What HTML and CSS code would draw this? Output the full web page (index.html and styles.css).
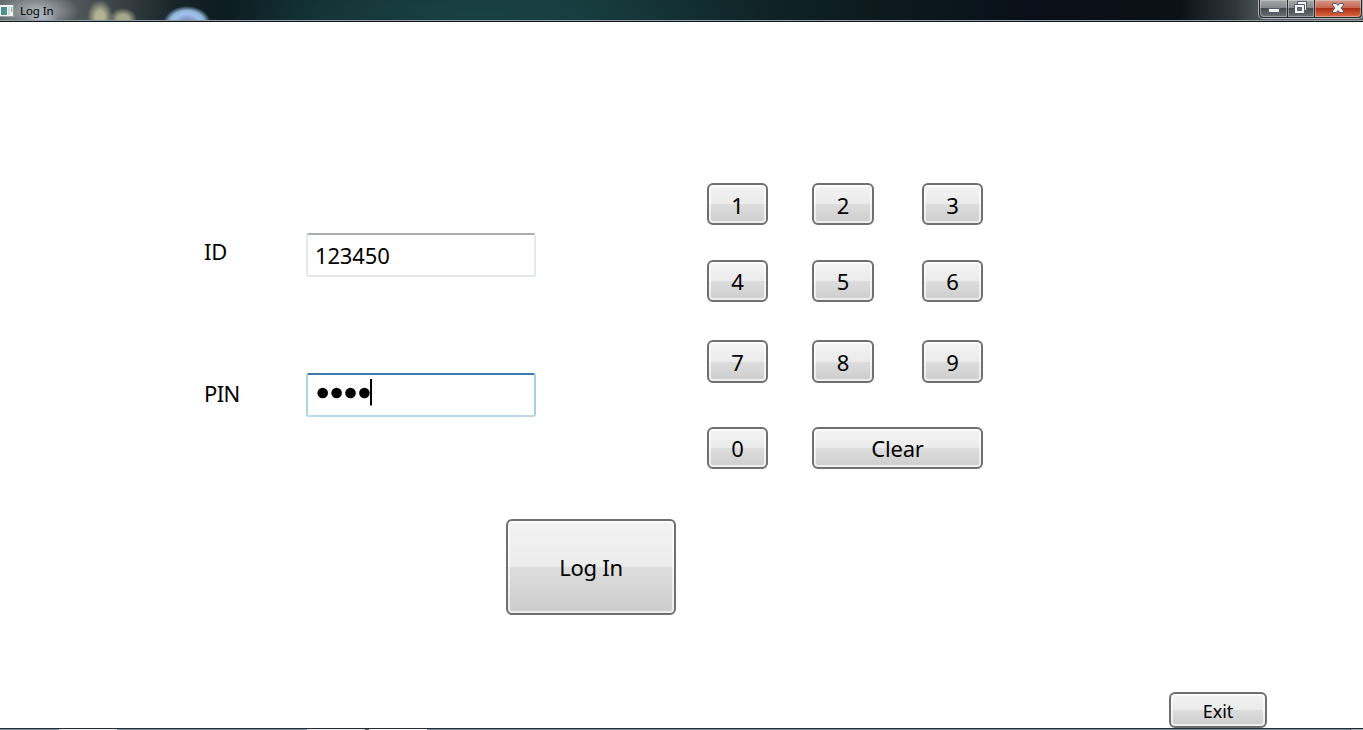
FILE: index.html
```
<!DOCTYPE html>
<html lang="en">
<head>
<meta charset="utf-8">
<title>Log In</title>
<link rel="stylesheet" href="styles.css">
</head>
<body>
<div class="window">
  <header class="titlebar">
    <svg class="app-icon" width="14" height="12" viewBox="0 0 14 12">
      <defs><linearGradient id="pic" x1="0" y1="0" x2="1" y2="1"><stop offset="0" stop-color="#4d80a5"/><stop offset="1" stop-color="#4d9b75"/></linearGradient></defs>
      <path d="M0 0h14v12H0z" fill="#f1f2f4"/><path d="M0 11.500h13.500V0" fill="none" stroke="#9a9fa5"/>
      <path d="M1 2h6v8H1z" fill="url(#pic)"/><path d="M8 2h2v8H8z" fill="#d3dbe0"/><path d="M11 2h1.500v5H11z" fill="#93bba8"/>
    </svg>
    <span class="title">Log In</span>
    <div class="controls">
      <div class="control minimize">
        <svg width="27" height="17" viewBox="0 0 27 17"><path d="M8.500 8.500h11v4h-11z" fill="#f5f5f5" stroke="#53596a"/></svg>
      </div>
      <div class="control restore">
        <svg width="26" height="17" viewBox="0 0 26 17"><path d="M9.500 1.500h9v9h-2v3h-10v-9h3z" fill="#f5f5f5" stroke="#53596a"/><path d="M9 4.500h7.500V11" fill="none" stroke="#53596a"/><path d="M9.500 7.500h4v3h-4z" fill="#70747d" stroke="#53596a"/></svg>
      </div>
      <div class="control close">
        <svg width="46" height="17" viewBox="0 0 46 17"><path d="M17.500 3.500h3.800l1.700 2 1.700-2h3.800v1.500l-2.500 3 2.500 3v1.500h-3.800l-1.700-2-1.700 2h-3.800v-1.500l2.500-3-2.500-3z" fill="#f5f5f5" stroke="#53596a"/></svg>
      </div>
    </div>
  </header>

  <main class="content">
    <div class="entry">
      <form class="fields">
        <label class="id-label" for="id">ID</label>
        <div class="field" id="id"><span class="value">123450</span></div>
        <label class="pin-label" for="pin">PIN</label>
        <div class="field focused" id="pin">
          <svg class="mask" width="56" height="27" viewBox="0 0 56 27"><g fill="#000"><circle cx="6.700" cy="14" r="5.300"/><circle cx="20.600" cy="14" r="5.300"/><circle cx="34.500" cy="14" r="5.300"/><circle cx="48.400" cy="14" r="5.300"/></g><path d="M54 0h2v26.500h-2z"/></svg>
        </div>
      </form>
      <div class="keypad">
        <button>1</button><button>2</button><button>3</button>
        <button>4</button><button>5</button><button>6</button>
        <button>7</button><button>8</button><button>9</button>
        <button>0</button><button class="clear">Clear</button>
      </div>
    </div>
    <button class="login">Log In</button>
    <button class="exit">Exit</button>
  </main>
  <footer class="frame-edge"></footer>
</div>
</body>
</html>
```
FILE: styles.css
```
* { box-sizing: border-box; }
body {
  margin: 0;
  background: #fff;
  color: #000;
  font-family: "Noto Sans", "Open Sans", sans-serif;
  font-size: 22px;
}
.window {
  width: 1363px;
  height: 730px;
  display: flex;
  flex-direction: column;
  overflow: hidden;
}
.titlebar {
  flex: none;
  height: 22px;
  display: flex;
  align-items: flex-start;
  border-bottom: 1px solid #10171d;
  box-shadow: inset 0 -1px #919ca3;
  background:
    radial-gradient(ellipse 42px 19px at 37px 11px, rgba(180, 187, 190, .8) 15%, transparent),
    radial-gradient(circle 18px at 42px 24px, #a8b6dc 10%, transparent),
    radial-gradient(ellipse 24px 18px at 187px 24px, #7981b5 15%, #9fc2ea 55%, #91b4d8 75%, transparent),
    radial-gradient(ellipse 13px 17px at 100px 17px, #b2b395 35%, transparent),
    radial-gradient(ellipse 14px 11px at 123px 19px, #a4a78b 40%, transparent),
    radial-gradient(ellipse 280px 60px at 480px 18px, rgba(27, 74, 76, .6), transparent),
    linear-gradient(90deg, #62686b 0, #565c5f 65px, #3a4144 120px, #17252a 175px, #0c1a1f 225px, #122d30 320px, #153639 460px, #143638 580px, #122b2e 680px, #0d1c20 850px, #091019 1030px, #0c1117 1180px, #30353a 1235px, #5a5f63 1270px);
}
.app-icon { margin-top: 5px; }
.title {
  margin: 3px 0 0 6px;
  font-size: 11.5px;
  line-height: 16px;
  letter-spacing: -.1px;
}
.controls {
  margin-left: auto;
  width: 105px;
  height: 19px;
  display: flex;
  gap: 1px;
  padding: 0 1px 1px;
  border: 1px solid #b0b3b6;
  border-top: 0;
  border-radius: 0 0 5px 5px;
  background: #25292e;
}
.control {
  height: 17px;
  box-shadow: inset 0 0 0 1px rgba(220, 222, 225, .45);
  background: linear-gradient(#a5a7a9, #85888b 46%, #44484d 47%, #6c7176);
}
.control svg { display: block; }
.minimize { width: 27px; border-bottom-left-radius: 4px; }
.restore { width: 26px; }
.close {
  flex: 1;
  border-bottom-right-radius: 4px;
  background: linear-gradient(#d59889, #c86550 46%, #aa2b12 47%, #d96a43);
}
.content {
  flex: none;
  height: 706px;
  display: flex;
  flex-direction: column;
  align-items: flex-start;
  padding: 161px 0 0 204px;
}
.entry {
  display: flex;
  align-items: flex-start;
  gap: 171px;
}
.fields {
  display: grid;
  grid-template-columns: 102px 230px;
  grid-template-rows: 44px 44px;
  row-gap: 96px;
  padding-top: 50px;
}
.fields label { line-height: 30px; }
.id-label { padding-top: 3px; letter-spacing: -.3px; }
.pin-label { padding: 5px 0 0; letter-spacing: -.6px; }
.field {
  border: 2px solid #e3e8ee;
  border-top-color: #abadb3;
  border-radius: 3px;
  padding: 5px 0 0 7px;
  line-height: 30px;
}
.field.focused {
  border-color: #3d7bad #a9d0e6 #b7d9ed #b0d2e7;
  padding: 4px 0 0 8px;
}
.value { letter-spacing: -.15px; }
.mask { display: block; }
.keypad {
  display: grid;
  grid-template-columns: 61px 62px 61px;
  grid-template-rows: 42px 42px 43px 42px;
  column-gap: 44px;
  row-gap: 35px;
}
.keypad button:nth-child(3n) { margin: 0 -4px 0 4px; }
.keypad button:nth-child(n+4) { padding-top: 0; }
.keypad button:nth-child(n+7) { margin-top: 3px; margin-bottom: -3px; }
.keypad button:nth-child(n+10) { margin-top: 12px; margin-bottom: -12px; }
button {
  font: inherit;
  color: inherit;
  padding: 2px 0 0;
  line-height: 30px;
  border: 2px solid #707070;
  border-radius: 6px;
  box-shadow: inset 0 0 0 2px rgba(255, 255, 255, .65);
  background: linear-gradient(#f3f3f3, #ebebeb 50%, #dddddd 50%, #cdcdcd) padding-box;
}
.clear { grid-column: span 2; margin-right: -4px; letter-spacing: -.2px; }
.login {
  width: 170px;
  height: 96px;
  margin: 62px 0 0 302px;
  padding-top: 0;
  letter-spacing: -.25px;
}
.exit {
  width: 98px;
  height: 36px;
  margin: 77px 0 0 965px;
  font-size: 18px;
  letter-spacing: -.1px;
}
.frame-edge {
  height: 2px;
  border-top: 1px solid #202b34;
  background: linear-gradient(90deg, #7c8e99 59px, #e9e9e9 59px 117px, #7c8e99 117px 307px, #e9e9e9 307px 365px, #555 365px 369px, #fff 369px 427px, #7c8e99 427px 1350px, #50565b 1350px 1351px, #a0aab2 1351px);
}
```
